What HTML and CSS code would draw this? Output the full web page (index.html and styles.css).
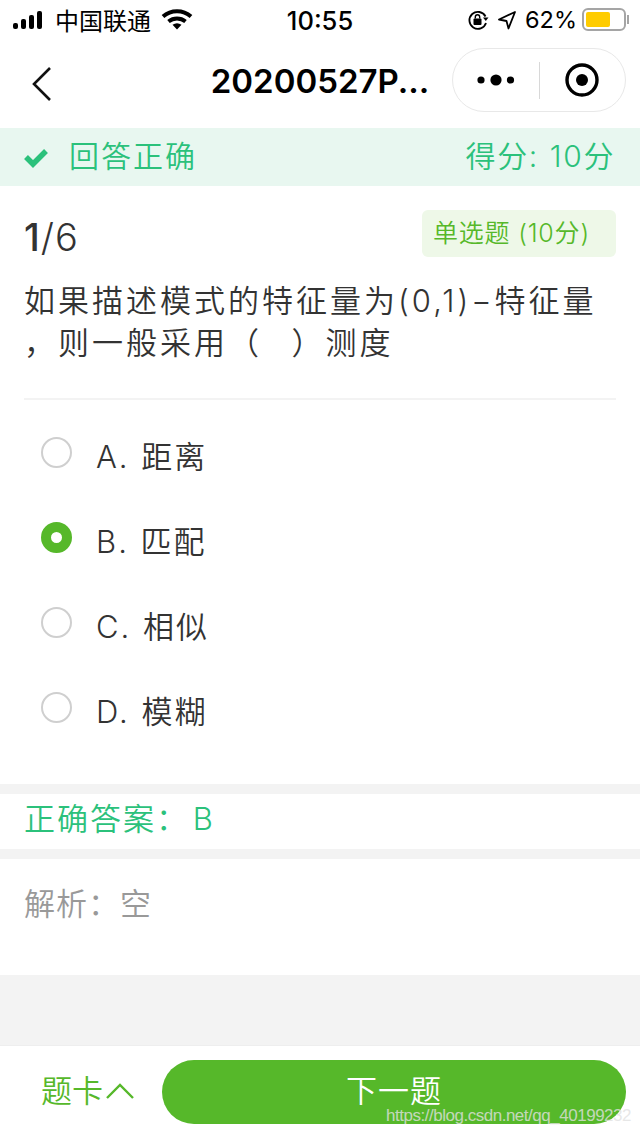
FILE: index.html
```html
<!DOCTYPE html>
<html lang="zh">
<head>
    <meta charset="UTF-8">
    <meta name="viewport" content="width=device-width, initial-scale=1.0">
    <title>20200527P...</title>
    <link rel="stylesheet" href="styles.css">
</head>
<body>
    <div class="page">
        <div class="statusbar">
            <div class="status-left">
                <svg class="signal" width="34" height="20" viewBox="0 0 34 20"><rect x="0" y="13" width="5" height="6" rx="2" fill="#000"/><rect x="8" y="9" width="5" height="10" rx="2" fill="#000"/><rect x="16" y="5" width="5" height="14" rx="2" fill="#000"/><rect x="24" y="1" width="5" height="18" rx="2" fill="#000"/></svg>
                <span class="carrier">中国联通</span>
                <svg class="wifi" width="32" height="22" viewBox="0 0 32 22"><path d="M2 7.5C10 .5 22 .5 30 7.5" fill="none" stroke="#000" stroke-width="4"/><path d="M7.5 12.5C12.5 8.5 19.5 8.5 24.5 12.5" fill="none" stroke="#000" stroke-width="4"/><path d="M11.5 15.8C14.500 13.800 17.500 13.800 20.500 15.800L16 20.500Z" fill="#000"/></svg>
            </div>
            <div class="status-time">10:55</div>
            <div class="status-right">
                <svg width="22" height="22" viewBox="0 0 22 22"><path d="M18.500 7.500A8.500 8.500 0 1 0 19 14" fill="none" stroke="#000" stroke-width="1.800"/><path d="M16 8.500h5.500l-2.700 3.500z" fill="#000"/><rect x="6.500" y="9.500" width="8" height="6.500" rx="1" fill="#000"/><path d="M8.300 9.500V8a2.200 2.200 0 0 1 4.400 0v1.500" fill="none" stroke="#000" stroke-width="1.400"/></svg>
                <svg width="20" height="20" viewBox="0 0 20 20"><path d="M18 2 2 9.500 9.500 11 11.500 18.500Z" fill="none" stroke="#000" stroke-width="1.800" stroke-linejoin="round"/></svg>
                <span class="percent">62%</span>
                <span class="battery"><span class="battery-level"></span></span>
                <span class="battery-tip"></span>
            </div>
        </div>

        <div class="navbar">
            <svg class="back" width="22" height="36" viewBox="0 0 22 36"><path d="M19 2 3 18 19 34" fill="none" stroke="#111" stroke-width="2.600"/></svg>
            <div class="nav-title">20200527P...</div>
            <div class="capsule">
                <div class="capsule-btn">
                    <svg width="38" height="14" viewBox="0 0 38 14"><circle cx="4" cy="7" r="3.600" fill="#000"/><circle cx="19" cy="7" r="5.600" fill="#000"/><circle cx="33.500" cy="7" r="3.600" fill="#000"/></svg>
                </div>
                <div class="capsule-line"></div>
                <div class="capsule-btn">
                    <svg width="36" height="36" viewBox="0 0 36 36"><circle cx="18" cy="18" r="15" fill="none" stroke="#000" stroke-width="3.400"/><circle cx="18" cy="18" r="6" fill="#000"/></svg>
                </div>
            </div>
        </div>

        <div class="result-bar">
            <div class="result-left">
                <svg width="26" height="22" viewBox="0 0 26 22"><path d="M3 11 10 18 23 5" fill="none" stroke="#2bc17b" stroke-width="5.500"/></svg>
                <span>回答正确</span>
            </div>
            <div class="result-score">得分: 10分</div>
        </div>

        <div class="question">
            <div class="question-head">
                <div class="progress"><b>1</b>/6</div>
                <div class="tag">单选题 (10分)</div>
            </div>
            <div class="question-text">如果描述模式的特征量为(0,1)−特征量<br>，则一般采用（ &nbsp;）测度</div>
            <div class="options">
                <div class="option"><span class="radio"></span><span>A. 距离</span></div>
                <div class="option"><span class="radio checked"></span><span>B. 匹配</span></div>
                <div class="option"><span class="radio"></span><span>C. 相似</span></div>
                <div class="option"><span class="radio"></span><span>D. 模糊</span></div>
            </div>
        </div>

        <div class="answer">正确答案： B</div>
        <div class="analysis">解析：空</div>
        <div class="spacer"></div>

        <div class="footer">
            <div class="card-toggle">
                <span>题卡</span>
                <svg width="30" height="18" viewBox="0 0 30 18"><path d="M2 16 15 3 28 16" fill="none" stroke="#56b82a" stroke-width="2.400"/></svg>
            </div>
            <div class="next-btn">下一题</div>
        </div>
        <div class="watermark">https://blog.csdn.net/qq_40199232</div>
    </div>
</body>
</html>
```

FILE: styles.css
```css
* {
    box-sizing: border-box;
}
body {
    margin: 0;
    background: #f3f3f3;
    font-family: "Inter", "Noto Sans CJK SC", sans-serif;
    font-weight: 350;
    color: #333;
}
.page {
    position: relative;
    width: 640px;
    height: 1136px;
    overflow: hidden;
    display: flex;
    flex-direction: column;
}
.statusbar {
    height: 42px;
    background: #fff;
    display: flex;
    justify-content: space-between;
    align-items: center;
    padding: 0 11px 3px 13px;
    position: relative;
    color: #000;
}
.status-left, .status-right {
    display: flex;
    align-items: center;
}
.signal {
    margin-right: 8px;
}
.carrier {
    font-size: 24px;
    font-weight: 400;
    margin-right: 10px;
}
.status-time {
    position: absolute;
    left: 0;
    right: 0;
    top: 5px;
    text-align: center;
    font-size: 25.500px;
    font-weight: 500;
}
.status-right svg {
    margin-right: 8px;
}
.percent {
    font-size: 23.500px;
    font-weight: 400;
    margin-right: 5px;
}
.battery {
    width: 44px;
    height: 23px;
    border: 2px solid #a5a5a5;
    border-radius: 6px;
    padding: 2px;
    display: block;
}
.battery-level {
    display: block;
    width: 24px;
    height: 100%;
    background: #ffcc00;
    border-radius: 2px;
}
.battery-tip {
    width: 2px;
    height: 9px;
    background: #a5a5a5;
    margin-left: 1px;
}
.navbar {
    height: 86px;
    background: #fff;
    display: flex;
    align-items: center;
    padding: 0 14px 10px 31px;
}
.back {
    flex: none;
    margin-top: 8px;
}
.nav-title {
    flex: 1;
    min-width: 0;
    text-align: center;
    font-size: 33px;
    font-weight: 600;
    color: #000;
    padding-left: 155px;
    margin-top: 2px;
    white-space: nowrap;
}
.capsule {
    width: 174px;
    height: 64px;
    border: 1px solid #e8e8e8;
    border-radius: 32px;
    display: flex;
    align-items: center;
    margin-left: 20px;
    flex: none;
}
.capsule-btn {
    flex: 1;
    display: flex;
    justify-content: center;
    align-items: center;
}
.capsule-line {
    width: 1px;
    height: 37px;
    background: #d8d8d8;
}
.result-bar {
    height: 58px;
    background: #e8f7f0;
    color: #2bc17b;
    display: flex;
    justify-content: space-between;
    align-items: center;
    padding: 0 25px 7px 23px;
    font-size: 30px;
}
.result-left {
    display: flex;
    align-items: center;
    gap: 20px;
    letter-spacing: 2px;
}
.result-left svg {
    margin-top: 7px;
}
.result-score {
    letter-spacing: 1.600px;
    word-spacing: 1px;
}
.question {
    height: 598px;
    background: #fff;
    padding: 24px 24px 0;
}
.question-head {
    display: flex;
    justify-content: space-between;
    align-items: flex-start;
}
.progress {
    font-size: 38px;
    line-height: 54px;
    letter-spacing: 1px;
    color: #333;
}
.progress b {
    font-weight: 500;
}
.tag {
    width: 194px;
    height: 47px;
    background: #eef8e8;
    color: #56b82a;
    border-radius: 6px;
    font-size: 25px;
    line-height: 46px;
    letter-spacing: 0.800px;
    padding-left: 11px;
}
.question-text {
    font-size: 31px;
    line-height: 42px;
    letter-spacing: 3px;
    word-spacing: 3px;
    margin-top: 16px;
    padding-bottom: 34px;
    border-bottom: 2px solid #f3f3f3;
}
.options {
    padding-top: 14px;
}
.option {
    height: 85px;
    display: flex;
    align-items: center;
    padding: 0 0 4px 17px;
    font-size: 31px;
    letter-spacing: 2px;
    word-spacing: 1px;
    color: #333;
}
.radio {
    width: 31px;
    height: 31px;
    border: 2px solid #cfcfcf;
    border-radius: 50%;
    margin-right: 24px;
    margin-top: -4px;
    flex: none;
}
.radio.checked {
    border: 10px solid #56b82a;
    background: #fff;
}
.answer {
    height: 55px;
    margin-top: 10px;
    background: #fff;
    color: #2bc17b;
    font-size: 31px;
    line-height: 50px;
    letter-spacing: 2px;
    word-spacing: -7px;
    padding-left: 24px;
}
.analysis {
    height: 116px;
    margin-top: 10px;
    background: #fff;
    color: #999;
    font-size: 31px;
    line-height: 90px;
    letter-spacing: 1px;
    padding-left: 24px;
}
.spacer {
    flex: 1;
}
.footer {
    height: 91px;
    background: #fff;
    border-top: 1px solid #eee;
    display: flex;
    align-items: center;
    padding: 0 14px 0 41px;
}
.card-toggle {
    width: 121px;
    display: flex;
    align-items: center;
    color: #56b82a;
    font-size: 31px;
    gap: 2px;
    padding-bottom: 6px;
}
.card-toggle svg {
    margin-top: 6px;
}
.next-btn {
    flex: 1;
    height: 64px;
    margin-top: 1px;
    background: #56b82a;
    color: #fff;
    border-radius: 32px;
    text-align: center;
    font-size: 31px;
    line-height: 62px;
    letter-spacing: 1px;
}
.watermark {
    position: absolute;
    left: 386px;
    top: 1106px;
    font-family: "Liberation Sans", sans-serif;
    font-weight: 400;
    font-size: 17px;
    letter-spacing: -0.480px;
    color: rgba(225, 225, 225, 0.8);
    white-space: nowrap;
}
```
